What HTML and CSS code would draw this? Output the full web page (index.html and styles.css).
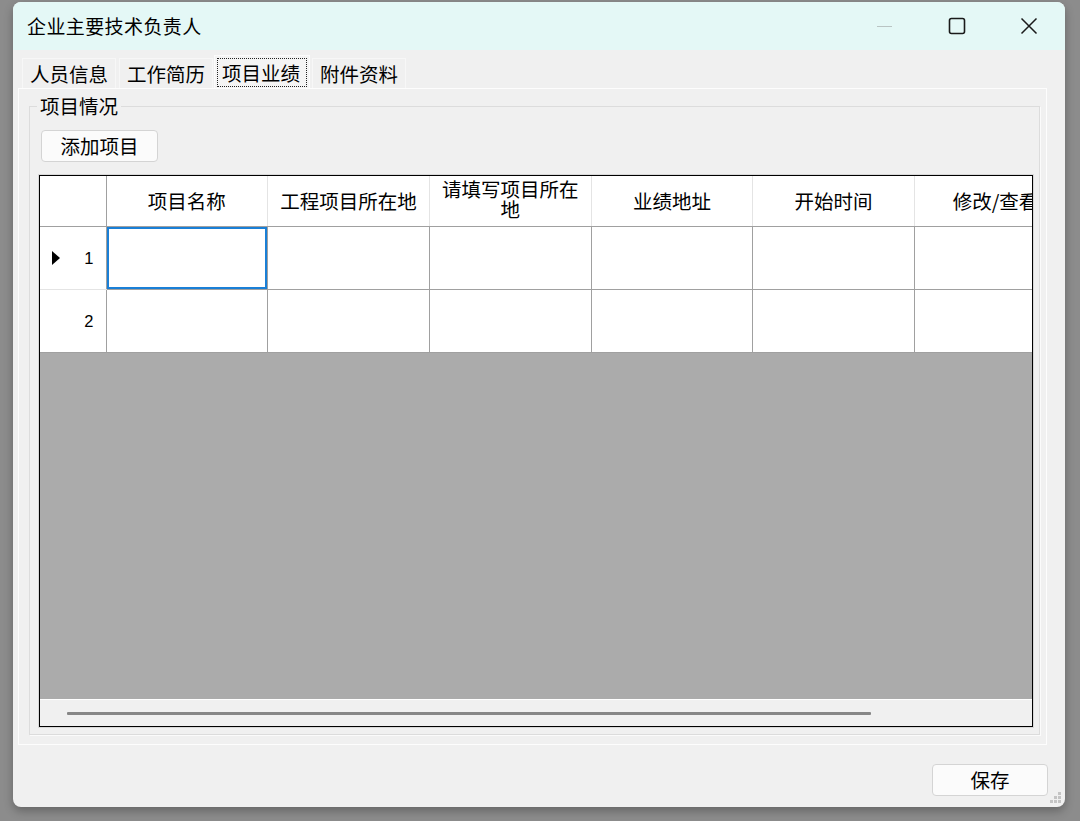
FILE: index.html
```html
<!DOCTYPE html>
<html lang="zh-CN">

<head>
    <meta charset="UTF-8" />
    <title>企业主要技术负责人</title>
    <link rel="stylesheet" href="styles.css">
</head>

<body>
    <div class="window">
        <div class="titlebar">
            <span class="title">企业主要技术负责人</span>
            <div class="controls">
                <span class="ctl">
                    <svg width="16" height="16" viewBox="0 0 16 16"><path d="M0 8.5h15" stroke="#b9c4c3" stroke-width="1"/></svg>
                </span>
                <span class="ctl">
                    <svg width="18" height="18" viewBox="0 0 18 18"><rect x="1.5" y="1.5" width="15" height="15" rx="2" fill="none" stroke="#1a1a1a" stroke-width="1.6"/></svg>
                </span>
                <span class="ctl">
                    <svg width="18" height="18" viewBox="0 0 18 18"><path d="M1.5 1.5l15 15M16.5 1.5l-15 15" stroke="#1a1a1a" stroke-width="1.5"/></svg>
                </span>
            </div>
        </div>

        <div class="client">
            <div class="tabs">
                <div class="tab">人员信息</div>
                <div class="tab">工作简历</div>
                <div class="tab active"><span class="focus">项目业绩</span></div>
                <div class="tab">附件资料</div>
            </div>

            <div class="tabpage">
                <fieldset class="group">
                    <legend>项目情况</legend>
                    <button type="button" class="btn add">添加项目</button>

                    <div class="grid">
                        <div class="grid-view">
                            <table class="data">
                                <colgroup>
                                    <col class="c-head">
                                    <col class="c-col">
                                    <col class="c-col">
                                    <col class="c-col">
                                    <col class="c-col">
                                    <col class="c-col">
                                    <col class="c-col">
                                </colgroup>
                                <thead>
                                    <tr>
                                        <th class="corner"></th>
                                        <th>项目名称</th>
                                        <th>工程项目所在地</th>
                                        <th class="wrap">请填写项目所在<br>地</th>
                                        <th>业绩地址</th>
                                        <th>开始时间</th>
                                        <th class="clip">修改/查看</th>
                                    </tr>
                                </thead>
                                <tbody>
                                    <tr>
                                        <td class="rowhead"><span class="arrow"></span>1</td>
                                        <td class="current"></td>
                                        <td></td>
                                        <td></td>
                                        <td></td>
                                        <td></td>
                                        <td></td>
                                    </tr>
                                    <tr>
                                        <td class="rowhead">2</td>
                                        <td></td>
                                        <td></td>
                                        <td></td>
                                        <td></td>
                                        <td></td>
                                        <td></td>
                                    </tr>
                                </tbody>
                            </table>
                        </div>
                        <div class="hscroll">
                            <div class="thumb"></div>
                        </div>
                    </div>
                </fieldset>
            </div>

            <div class="footer">
                <button type="button" class="btn save">保存</button>
            </div>
        </div>

        <svg class="grip" width="12" height="12" viewBox="0 0 12 12">
            <rect x="8" y="0" width="3" height="3" fill="#c4c4c4"/>
            <rect x="4" y="4" width="3" height="3" fill="#c4c4c4"/>
            <rect x="8" y="4" width="3" height="3" fill="#c4c4c4"/>
            <rect x="0" y="8" width="3" height="3" fill="#c4c4c4"/>
            <rect x="4" y="8" width="3" height="3" fill="#c4c4c4"/>
            <rect x="8" y="8" width="3" height="3" fill="#c4c4c4"/>
        </svg>
    </div>
</body>

</html>
```

FILE: styles.css
```css
body {
    margin: 0;
    height: 821px;
    overflow: hidden;
    background: #8c8c8c;
    font-family: "Noto Sans CJK SC", "Noto Sans", sans-serif;
    color: #000;
}

.window {
    position: relative;
    margin: 2px 0 0 13px;
    width: 1052px;
    height: 805px;
    background: #f0f0f0;
    border-radius: 8px;
    overflow: hidden;
    box-shadow: 0 4px 10px rgba(0, 0, 0, 0.28);
}

.titlebar {
    height: 48px;
    background: #e4f8f6;
    display: flex;
    align-items: center;
    justify-content: space-between;
    padding-left: 14px;
}

.title {
    font-size: 19px;
    line-height: 20px;
    letter-spacing: 0.4px;
}

.controls {
    display: flex;
    height: 100%;
}

.ctl {
    width: 72px;
    display: flex;
    align-items: center;
    justify-content: center;
}

.tabs {
    display: flex;
    height: 31px;
    margin-top: 7px;
    padding-left: 9px;
    align-items: flex-end;
}

.tab {
    height: 30px;
    padding: 0 7px;
    margin-right: 3px;
    font-size: 19.5px;
    line-height: 30px;
    background: #f0f0f0;
    border: 1px solid #f7f7f7;
    border-bottom: none;
    box-sizing: border-box;
}

.tab.active {
    height: 33px;
    margin: 0 2px 0 -2px;
    padding: 2px 2px 0 2px;
    background: #f4f4f4;
    border-color: #fbfbfb;
    line-height: 27px;
}

.focus {
    display: block;
    padding: 0 6px 0 4px;
    border: 1px dotted #222;
    line-height: 27px;
}

.tabpage {
    margin-left: 5px;
    width: 1029px;
    height: 657px;
    box-sizing: border-box;
    border: 1px solid #fdfdfd;
    background: #f0f0f0;
    padding-top: 7px;
}

.group {
    margin: 0 0 0 10px;
    padding: 0;
    width: 1011px;
    height: 639px;
    box-sizing: border-box;
    border: 1px solid #dcdcdc;
    box-shadow: 1px 1px 0 #fbfbfb;
    min-width: 0;
}

.group legend {
    margin-left: 7px;
    padding: 0 3px;
    font-size: 19.5px;
    line-height: 20px;
}

.btn {
    display: block;
    font-family: inherit;
    font-size: 19.5px;
    line-height: 20px;
    color: #000;
    background: #fbfbfb;
    border: 1px solid #d4d4d4;
    border-radius: 4px;
    padding: 0;
    box-sizing: border-box;
}

.add {
    margin: 14px 0 0 11px;
    width: 117px;
    height: 32px;
}

.grid {
    margin: 13px 0 0 9px;
    width: 994px;
    height: 552px;
    box-sizing: border-box;
    border: 1px solid #000;
    box-shadow: 0 0 0 1px #d8d8d8;
    display: flex;
    flex-direction: column;
    overflow: hidden;
}

.grid-view {
    flex: 1;
    background: #ababab;
    overflow: hidden;
}

.data {
    border-collapse: collapse;
    table-layout: fixed;
    width: 1036px;
    background: #fff;
}

.c-head {
    width: 66px;
}

.c-col {
    width: 161.7px;
}

.data th {
    height: 50px;
    padding: 0;
    font-weight: normal;
    font-size: 19.5px;
    line-height: 20px;
    text-align: center;
    white-space: nowrap;
    border-left: 1px solid #e4e4e4;
    border-bottom: 1px solid #a0a0a0;
    vertical-align: middle;
}

.data th.wrap {
    vertical-align: top;
    padding-top: 3px;
    line-height: 19.5px;
    box-sizing: border-box;
}

.data th.clip {
    overflow: hidden;
}

.data th.corner {
    border-left: none;
    border-right: 1px solid #a0a0a0;
}

.data td {
    height: 62px;
    padding: 0;
    border: 1px solid #a0a0a0;
    border-top: none;
}

.data td.rowhead {
    position: relative;
    border-left: none;
    border-bottom-color: #e4e4e4;
    text-align: right;
    padding-right: 12px;
    font-family: "Liberation Sans", Arial, sans-serif;
    font-size: 16.5px;
}

.data tr:last-child td {
    border-bottom: 1px solid #a0a0a0;
}

.arrow {
    position: absolute;
    left: 12px;
    top: 24px;
    width: 0;
    height: 0;
    border-top: 7px solid transparent;
    border-bottom: 7px solid transparent;
    border-left: 8px solid #000;
}

.data td.current {
    box-shadow: inset 0 0 0 2px #1a7fd6;
}

.hscroll {
    height: 27px;
    border-top: 1px solid #fff;
    background: #f0f0f0;
    padding: 12px 0 0 27px;
    box-sizing: border-box;
}

.thumb {
    width: 804px;
    height: 3px;
    background: #868686;
    border-radius: 1px;
}

.footer {
    display: flex;
    justify-content: flex-end;
    padding: 19px 17px 0 0;
}

.save {
    width: 116px;
    height: 32px;
}

.grip {
    position: absolute;
    right: 3px;
    bottom: 3px;
}
```
